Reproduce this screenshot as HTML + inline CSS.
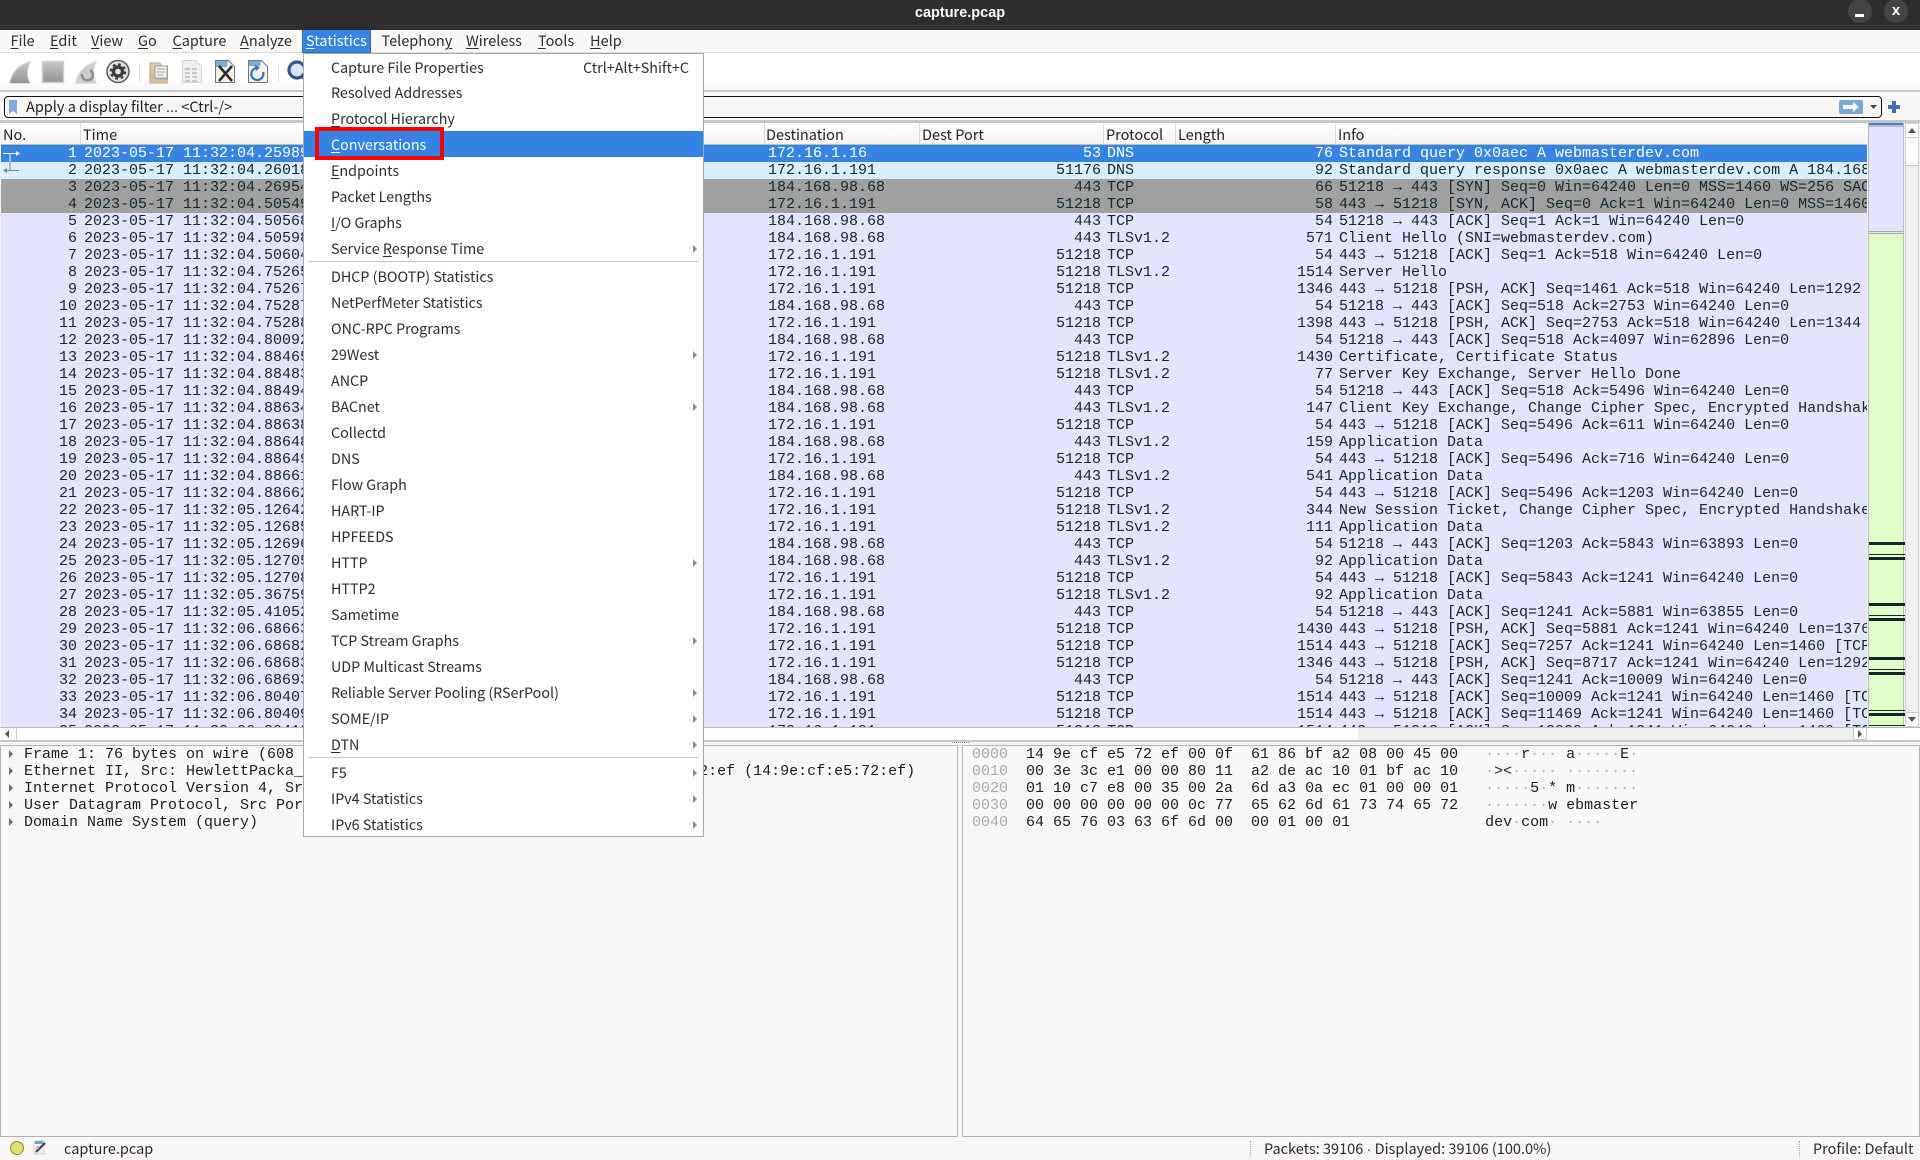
<!DOCTYPE html>
<html lang="en">
<head>
<meta charset="utf-8">
<title>capture.pcap</title>
<style>
html,body{margin:0;padding:0;width:1920px;height:1160px;overflow:hidden;background:#f6f5f4;}
*{box-sizing:border-box;}
body{position:relative;font-family:"Noto Sans CJK SC","Liberation Sans",sans-serif;font-size:14.5px;color:#2a2e2f;}
.a{position:absolute;}
u{text-underline-offset:2px;text-decoration-thickness:1px;}
.ls{font-family:"Liberation Sans",sans-serif;}
#title{left:0;top:0;width:1920px;height:30px;background:#2e2e2e;color:#fff;font-family:"Liberation Sans",sans-serif;font-weight:700;font-size:14.5px;line-height:26px;text-align:center;}
.wc{top:-1px;width:24px;height:24px;border-radius:50%;background:#454545;}
#mb{left:0;top:30px;width:1920px;height:23px;background:#f9f8f6;border-bottom:1px solid #dcdcdc;}
.m{top:30px;height:22px;line-height:21px;white-space:nowrap;}
#sthi{left:302px;top:30px;width:69px;height:23px;background:#3584e4;border:1px solid #2a6fc4;border-top:0;}
#tb{left:0;top:53px;width:1920px;height:39px;background:linear-gradient(#fff,#fff 60%,#f8f8f7);border-bottom:2px solid #c4c4c4;}
#fb{left:0;top:92px;width:1920px;height:31px;background:#f9f8f6;}
#fi{left:4px;top:96px;width:1878px;height:22px;background:#f6f5f3;border:1px solid #111;border-radius:4px;}
#ph{left:26px;top:96px;height:22px;line-height:21px;color:#222;white-space:nowrap;}
#frame{left:0;top:120px;width:1920px;height:3px;background:#c6c6c6;}
#hd{left:1px;top:123px;width:1866px;height:22px;background:linear-gradient(#fff,#f4f4f4);border-bottom:1px solid #bdbdbd;}
.h{top:123px;height:21px;line-height:24px;white-space:nowrap;color:#222;}
.hs{top:123px;width:1px;height:21px;background:#d8d8d8;}
#list{left:1px;top:145px;width:1866px;height:582px;overflow:hidden;background:#e4e4ff;font-family:"Liberation Mono",monospace;font-size:15px;color:#12272e;}
.r{position:relative;height:17px;line-height:17px;white-space:pre;background:#e4e4ff;}
.r span{position:absolute;top:0;height:17px;}
.n{left:0;width:76px;text-align:right;}
.t{left:83px;}
.d{left:767px;}
.p{left:900px;width:200px;text-align:right;}
.o{left:1106px;}
.l{left:1233px;width:99px;text-align:right;}
.i{left:1338px;}
.sel{background:#3584e4;color:#fff;}
.rel{background:#daeeff;}
.gr{background:#a0a0a0;}
#mini{left:1868px;top:123px;width:36px;height:604px;background:#e0ffc8;border-left:1px solid #bbb;border-right:1px solid #bbb;}
.mk{position:absolute;left:0;width:36px;background:#12272e;}
#vt{left:1905px;top:123px;width:14px;height:604px;background:#efefef;border:1px solid #cfcfcf;}
#hsb{left:0;top:727px;width:1920px;height:13px;background:#fff;border-top:1px solid #bbb;}
#split{left:0;top:740px;width:1920px;height:5px;background:#f6f5f4;border-top:2px solid #c6c6c6;}
.pane{top:745px;height:392px;background:#f9f8f6;border:1px solid #b4b4b4;border-bottom:1px solid #b0b0b0;}
.tx{font-family:"Liberation Mono",monospace;font-size:15px;line-height:17px;white-space:pre;color:#1d1d1d;}
.of{color:#a9a9a9;}
.nd{color:#b4b4b4;}
.ar{width:0;height:0;border-left:4px solid #6e6e6e;border-top:4px solid transparent;border-bottom:4px solid transparent;}
#st{left:0;top:1137px;width:1920px;height:23px;background:#f9f8f6;}
.stx{top:1137px;line-height:24px;white-space:nowrap;}
.dv{top:1141px;height:16px;width:0;border-left:1px dotted #aaa;}
#menu{left:303px;top:53px;width:401px;height:784px;background:#fff;border:1px solid #a8a8a8;overflow:hidden;color:#2a2e2f;font-size:14.3px;}
.mi{position:absolute;left:0;width:399px;height:26px;line-height:25px;padding-left:27px;white-space:nowrap;}
.mi.hl{background:#3584e4;color:#fff;line-height:27px;}
.sub::after{content:"";position:absolute;right:6px;top:9px;border-left:4px solid #8a8a8a;border-top:4px solid transparent;border-bottom:4px solid transparent;}
.sp{position:absolute;left:5px;width:389px;height:1px;background:#c4c4c4;}
#red{left:315px;top:127px;width:129px;height:33px;border:4px solid #f00;}
svg{position:absolute;overflow:visible;}
</style>
</head>
<body>
<div class="a" id="title">capture.pcap</div>
<div class="a wc" style="left:1848px"></div>
<div class="a wc" style="left:1884px"></div>
<div class="a" style="left:1855px;top:14px;width:9px;height:3px;background:#fff"></div>
<div class="a" style="left:1890px;top:3px;width:12px;height:16px;color:#fff;font:700 15px/16px 'Liberation Sans',sans-serif;text-align:center">x</div>

<div class="a" id="mb"></div>
<div class="a" id="sthi"></div>
<div class="a m" style="left:10.5px"><u>F</u>ile</div>
<div class="a m" style="left:50px"><u>E</u>dit</div>
<div class="a m" style="left:91px"><u>V</u>iew</div>
<div class="a m" style="left:138px"><u>G</u>o</div>
<div class="a m" style="left:172.5px"><u>C</u>apture</div>
<div class="a m" style="left:240px"><u>A</u>nalyze</div>
<div class="a m" style="left:306px;color:#fff"><u>S</u>tatistics</div>
<div class="a m" style="left:381.5px">Telephon<u>y</u></div>
<div class="a m" style="left:466px"><u>W</u>ireless</div>
<div class="a m" style="left:538px"><u>T</u>ools</div>
<div class="a m" style="left:590px"><u>H</u>elp</div>

<div class="a" id="tb"></div>
<svg class="a" style="left:0;top:52px" width="310" height="44" viewBox="0 0 310 44">
  <defs>
    <linearGradient id="g1" x1="0" y1="0" x2="0" y2="1"><stop offset="0" stop-color="#c8c8c8"/><stop offset="1" stop-color="#929292"/></linearGradient>
    <linearGradient id="g2" x1="0" y1="0" x2="0" y2="1"><stop offset="0" stop-color="#e3d3b4"/><stop offset="1" stop-color="#c6ae88"/></linearGradient>
  </defs>
  <path d="M9.500 31.500C11 21 19 12 30.500 9.500C27 17 26.500 25 30.500 31.500Z" fill="url(#g1)" stroke="#dcdcdc"/>
  <rect x="42.500" y="9.500" width="21" height="21" fill="url(#g1)" stroke="#cfcfcf" stroke-width="1.500"/>
  <path d="M75.500 31.500C77 21 85 12 96.500 9.500C93 17 92.500 25 96.500 31.500Z" fill="#cdcdcd" stroke="#e0e0e0"/>
  <path d="M90 18a5.500 5.500 0 1 1-8 4" fill="none" stroke="#8e8e8e" stroke-width="2.500"/>
  <circle cx="118" cy="19.500" r="11" fill="#e4e4e4" stroke="#5a5a5a" stroke-width="1.500"/>
  <circle cx="118" cy="19.500" r="6.200" fill="#3e3e3e"/>
  <circle cx="118" cy="19.500" r="7.200" fill="none" stroke="#3e3e3e" stroke-width="2.200" stroke-dasharray="2.800 2.850"/>
  <circle cx="118" cy="19.500" r="2.800" fill="#e8e8e8"/>
  <rect x="139" y="11" width="1" height="19" fill="#ddd"/>
  <path d="M150 11h10l1.500 3h6v17h-17.500Z" fill="url(#g2)" stroke="#b6a17c"/>
  <rect x="155" y="14" width="12" height="12" fill="#f6f6f6" stroke="#9a9a9a"/>
  <path d="M157 17h8M157 20h8M157 23h6" stroke="#999" fill="none"/>
  <path d="M150 26h5v2h13v3h-18Z" fill="#d5bf9a"/>
  <path d="M182.500 8.500h13l6 6v16h-19Z" fill="#f0f0f0" stroke="#d4d4d4"/>
  <path d="M185 17h5M192 17h5M185 21h5M192 21h5M185 25h5M192 25h5M185 29h5M192 29h5" stroke="#c8c8c8" stroke-width="2" fill="none"/>
  <path d="M215.500 8.500h13l6 6v16h-19Z" fill="#f3f3e7" stroke="#777"/>
  <path d="M216 9h12l-1 6h-11Z" fill="#74b0e2"/>
  <path d="M219 14L232 29M232 14L219 29" stroke="#2a2a2a" stroke-width="2.500" fill="none"/>
  <path d="M248.500 8.500h13l6 6v16h-19Z" fill="#f3f3e7" stroke="#777"/>
  <path d="M249 9h12l-1 5h-11Z" fill="#74b0e2"/>
  <path d="M263 20a6 6 0 1 1-5-4" fill="none" stroke="#3473c0" stroke-width="2.200"/>
  <path d="M254.500 12.500l5.500 3-4 3.500Z" fill="#3473c0"/>
  <rect x="278" y="11" width="1" height="19" fill="#ddd"/>
  <circle cx="297" cy="18" r="8" fill="#dbe6f5" stroke="#34558f" stroke-width="3.200"/>
  <path d="M302 24l6 6" stroke="#444" stroke-width="3.500"/>
</svg>

<div class="a" id="fb"></div>
<div class="a" id="fi"></div>
<svg class="a" style="left:9px;top:100px" width="9" height="15" viewBox="0 0 9 15"><path d="M0 0h8v14l-4-3-4 3Z" fill="#7ea9de"/></svg>
<div class="a" id="ph">Apply a display filter <span class="ls">...</span> &lt;Ctrl-/&gt;</div>
<svg class="a" style="left:1838px;top:99px" width="60" height="16" viewBox="0 0 60 16">
  <rect x="1" y="1" width="24" height="14" rx="2" fill="#7ca7da"/>
  <path d="M5 6h10V3l6 5-6 5v-3H5Z" fill="#fff"/>
  <path d="M32 6h7l-3.500 4Z" fill="#444"/>
  <path d="M54 2h4v4h4v4h-4v4h-4v-4h-4V6h4Z" fill="#3f6fb5"/>
</svg>

<div class="a" id="frame"></div>
<div class="a" id="hd"></div>
<div class="a h" style="left:3px">No.</div>
<div class="a h" style="left:83px">Time</div>
<div class="a h" style="left:766px">Destination</div>
<div class="a h" style="left:922px">Dest Port</div>
<div class="a h" style="left:1106px">Protocol</div>
<div class="a h" style="left:1178px">Length</div>
<div class="a h" style="left:1338px">Info</div>
<div class="a hs" style="left:80px"></div>
<div class="a hs" style="left:764px"></div>
<div class="a hs" style="left:919px"></div>
<div class="a hs" style="left:1103px"></div>
<div class="a hs" style="left:1175px"></div>
<div class="a hs" style="left:1335px"></div>

<div class="a" id="list">
<div class="r sel"><span class="n">1</span><span class="t">2023-05-17 11:32:04.259890</span><span class="d">172.16.1.16</span><span class="p">53</span><span class="o">DNS</span><span class="l">76</span><span class="i">Standard query 0x0aec A webmasterdev.com</span></div>
<div class="r rel"><span class="n">2</span><span class="t">2023-05-17 11:32:04.260180</span><span class="d">172.16.1.191</span><span class="p">51176</span><span class="o">DNS</span><span class="l">92</span><span class="i">Standard query response 0x0aec A webmasterdev.com A 184.168.98.68</span></div>
<div class="r gr"><span class="n">3</span><span class="t">2023-05-17 11:32:04.269540</span><span class="d">184.168.98.68</span><span class="p">443</span><span class="o">TCP</span><span class="l">66</span><span class="i">51218 → 443 [SYN] Seq=0 Win=64240 Len=0 MSS=1460 WS=256 SACK_PERM</span></div>
<div class="r gr"><span class="n">4</span><span class="t">2023-05-17 11:32:04.505490</span><span class="d">172.16.1.191</span><span class="p">51218</span><span class="o">TCP</span><span class="l">58</span><span class="i">443 → 51218 [SYN, ACK] Seq=0 Ack=1 Win=64240 Len=0 MSS=1460</span></div>
<div class="r"><span class="n">5</span><span class="t">2023-05-17 11:32:04.505680</span><span class="d">184.168.98.68</span><span class="p">443</span><span class="o">TCP</span><span class="l">54</span><span class="i">51218 → 443 [ACK] Seq=1 Ack=1 Win=64240 Len=0</span></div>
<div class="r"><span class="n">6</span><span class="t">2023-05-17 11:32:04.505980</span><span class="d">184.168.98.68</span><span class="p">443</span><span class="o">TLSv1.2</span><span class="l">571</span><span class="i">Client Hello (SNI=webmasterdev.com)</span></div>
<div class="r"><span class="n">7</span><span class="t">2023-05-17 11:32:04.506040</span><span class="d">172.16.1.191</span><span class="p">51218</span><span class="o">TCP</span><span class="l">54</span><span class="i">443 → 51218 [ACK] Seq=1 Ack=518 Win=64240 Len=0</span></div>
<div class="r"><span class="n">8</span><span class="t">2023-05-17 11:32:04.752650</span><span class="d">172.16.1.191</span><span class="p">51218</span><span class="o">TLSv1.2</span><span class="l">1514</span><span class="i">Server Hello</span></div>
<div class="r"><span class="n">9</span><span class="t">2023-05-17 11:32:04.752670</span><span class="d">172.16.1.191</span><span class="p">51218</span><span class="o">TCP</span><span class="l">1346</span><span class="i">443 → 51218 [PSH, ACK] Seq=1461 Ack=518 Win=64240 Len=1292</span></div>
<div class="r"><span class="n">10</span><span class="t">2023-05-17 11:32:04.752870</span><span class="d">184.168.98.68</span><span class="p">443</span><span class="o">TCP</span><span class="l">54</span><span class="i">51218 → 443 [ACK] Seq=518 Ack=2753 Win=64240 Len=0</span></div>
<div class="r"><span class="n">11</span><span class="t">2023-05-17 11:32:04.752880</span><span class="d">172.16.1.191</span><span class="p">51218</span><span class="o">TCP</span><span class="l">1398</span><span class="i">443 → 51218 [PSH, ACK] Seq=2753 Ack=518 Win=64240 Len=1344</span></div>
<div class="r"><span class="n">12</span><span class="t">2023-05-17 11:32:04.800920</span><span class="d">184.168.98.68</span><span class="p">443</span><span class="o">TCP</span><span class="l">54</span><span class="i">51218 → 443 [ACK] Seq=518 Ack=4097 Win=62896 Len=0</span></div>
<div class="r"><span class="n">13</span><span class="t">2023-05-17 11:32:04.884650</span><span class="d">172.16.1.191</span><span class="p">51218</span><span class="o">TLSv1.2</span><span class="l">1430</span><span class="i">Certificate, Certificate Status</span></div>
<div class="r"><span class="n">14</span><span class="t">2023-05-17 11:32:04.884830</span><span class="d">172.16.1.191</span><span class="p">51218</span><span class="o">TLSv1.2</span><span class="l">77</span><span class="i">Server Key Exchange, Server Hello Done</span></div>
<div class="r"><span class="n">15</span><span class="t">2023-05-17 11:32:04.884940</span><span class="d">184.168.98.68</span><span class="p">443</span><span class="o">TCP</span><span class="l">54</span><span class="i">51218 → 443 [ACK] Seq=518 Ack=5496 Win=64240 Len=0</span></div>
<div class="r"><span class="n">16</span><span class="t">2023-05-17 11:32:04.886340</span><span class="d">184.168.98.68</span><span class="p">443</span><span class="o">TLSv1.2</span><span class="l">147</span><span class="i">Client Key Exchange, Change Cipher Spec, Encrypted Handshake Message</span></div>
<div class="r"><span class="n">17</span><span class="t">2023-05-17 11:32:04.886380</span><span class="d">172.16.1.191</span><span class="p">51218</span><span class="o">TCP</span><span class="l">54</span><span class="i">443 → 51218 [ACK] Seq=5496 Ack=611 Win=64240 Len=0</span></div>
<div class="r"><span class="n">18</span><span class="t">2023-05-17 11:32:04.886480</span><span class="d">184.168.98.68</span><span class="p">443</span><span class="o">TLSv1.2</span><span class="l">159</span><span class="i">Application Data</span></div>
<div class="r"><span class="n">19</span><span class="t">2023-05-17 11:32:04.886490</span><span class="d">172.16.1.191</span><span class="p">51218</span><span class="o">TCP</span><span class="l">54</span><span class="i">443 → 51218 [ACK] Seq=5496 Ack=716 Win=64240 Len=0</span></div>
<div class="r"><span class="n">20</span><span class="t">2023-05-17 11:32:04.886610</span><span class="d">184.168.98.68</span><span class="p">443</span><span class="o">TLSv1.2</span><span class="l">541</span><span class="i">Application Data</span></div>
<div class="r"><span class="n">21</span><span class="t">2023-05-17 11:32:04.886620</span><span class="d">172.16.1.191</span><span class="p">51218</span><span class="o">TCP</span><span class="l">54</span><span class="i">443 → 51218 [ACK] Seq=5496 Ack=1203 Win=64240 Len=0</span></div>
<div class="r"><span class="n">22</span><span class="t">2023-05-17 11:32:05.126420</span><span class="d">172.16.1.191</span><span class="p">51218</span><span class="o">TLSv1.2</span><span class="l">344</span><span class="i">New Session Ticket, Change Cipher Spec, Encrypted Handshake Message</span></div>
<div class="r"><span class="n">23</span><span class="t">2023-05-17 11:32:05.126850</span><span class="d">172.16.1.191</span><span class="p">51218</span><span class="o">TLSv1.2</span><span class="l">111</span><span class="i">Application Data</span></div>
<div class="r"><span class="n">24</span><span class="t">2023-05-17 11:32:05.126960</span><span class="d">184.168.98.68</span><span class="p">443</span><span class="o">TCP</span><span class="l">54</span><span class="i">51218 → 443 [ACK] Seq=1203 Ack=5843 Win=63893 Len=0</span></div>
<div class="r"><span class="n">25</span><span class="t">2023-05-17 11:32:05.127050</span><span class="d">184.168.98.68</span><span class="p">443</span><span class="o">TLSv1.2</span><span class="l">92</span><span class="i">Application Data</span></div>
<div class="r"><span class="n">26</span><span class="t">2023-05-17 11:32:05.127080</span><span class="d">172.16.1.191</span><span class="p">51218</span><span class="o">TCP</span><span class="l">54</span><span class="i">443 → 51218 [ACK] Seq=5843 Ack=1241 Win=64240 Len=0</span></div>
<div class="r"><span class="n">27</span><span class="t">2023-05-17 11:32:05.367590</span><span class="d">172.16.1.191</span><span class="p">51218</span><span class="o">TLSv1.2</span><span class="l">92</span><span class="i">Application Data</span></div>
<div class="r"><span class="n">28</span><span class="t">2023-05-17 11:32:05.410520</span><span class="d">184.168.98.68</span><span class="p">443</span><span class="o">TCP</span><span class="l">54</span><span class="i">51218 → 443 [ACK] Seq=1241 Ack=5881 Win=63855 Len=0</span></div>
<div class="r"><span class="n">29</span><span class="t">2023-05-17 11:32:06.686630</span><span class="d">172.16.1.191</span><span class="p">51218</span><span class="o">TCP</span><span class="l">1430</span><span class="i">443 → 51218 [PSH, ACK] Seq=5881 Ack=1241 Win=64240 Len=1376</span></div>
<div class="r"><span class="n">30</span><span class="t">2023-05-17 11:32:06.686820</span><span class="d">172.16.1.191</span><span class="p">51218</span><span class="o">TCP</span><span class="l">1514</span><span class="i">443 → 51218 [ACK] Seq=7257 Ack=1241 Win=64240 Len=1460 [TCP segment</span></div>
<div class="r"><span class="n">31</span><span class="t">2023-05-17 11:32:06.686830</span><span class="d">172.16.1.191</span><span class="p">51218</span><span class="o">TCP</span><span class="l">1346</span><span class="i">443 → 51218 [PSH, ACK] Seq=8717 Ack=1241 Win=64240 Len=1292</span></div>
<div class="r"><span class="n">32</span><span class="t">2023-05-17 11:32:06.686930</span><span class="d">184.168.98.68</span><span class="p">443</span><span class="o">TCP</span><span class="l">54</span><span class="i">51218 → 443 [ACK] Seq=1241 Ack=10009 Win=64240 Len=0</span></div>
<div class="r"><span class="n">33</span><span class="t">2023-05-17 11:32:06.804070</span><span class="d">172.16.1.191</span><span class="p">51218</span><span class="o">TCP</span><span class="l">1514</span><span class="i">443 → 51218 [ACK] Seq=10009 Ack=1241 Win=64240 Len=1460 [TCP segment</span></div>
<div class="r"><span class="n">34</span><span class="t">2023-05-17 11:32:06.804090</span><span class="d">172.16.1.191</span><span class="p">51218</span><span class="o">TCP</span><span class="l">1514</span><span class="i">443 → 51218 [ACK] Seq=11469 Ack=1241 Win=64240 Len=1460 [TCP segment</span></div>
<div class="r"><span class="n">35</span><span class="t">2023-05-17 11:32:06.804100</span><span class="d">172.16.1.191</span><span class="p">51218</span><span class="o">TCP</span><span class="l">1514</span><span class="i">443 → 51218 [ACK] Seq=12929 Ack=1241 Win=64240 Len=1460 [TCP segment</span></div>
</div>
<svg class="a" style="left:0;top:145px" width="24" height="34" viewBox="0 0 24 34">
  <path d="M3 8.500H17M10 8.500V17" stroke="#fff" fill="none"/>
  <path d="M16 6l4 2.500-4 2.500Z" fill="#fff"/>
  <path d="M10 17V25.500M5 25.500H19" stroke="#7c8388" fill="none"/>
  <path d="M7 23l-4 2.500 4 2.500Z" fill="#7c8388"/>
</svg>

<div class="a" id="mini">
  <div class="a" style="left:0;top:0;width:34px;height:2px;background:#3584e4"></div>
  <div class="a" style="left:0;top:2px;width:34px;height:2px;background:#bbb"></div>
  <div class="a" style="left:0;top:4px;width:34px;height:104px;background:#e4e4ff"></div>
  <div class="a" style="left:0;top:108px;width:34px;height:1px;background:#aaa"></div>
  <div class="a" style="left:0;top:110px;width:34px;height:1px;background:#aaa"></div>
  <div class="a" style="left:0;top:109px;width:34px;height:1px;background:#e4e4ff"></div>
  <div class="mk" style="top:418.500px;height:3.500px"></div>
  <div class="mk" style="top:431px;height:1px"></div>
  <div class="mk" style="top:433.500px;height:3px"></div>
  <div class="mk" style="top:479.500px;height:3.500px"></div>
  <div class="mk" style="top:492px;height:1px"></div>
  <div class="mk" style="top:495px;height:3px"></div>
  <div class="mk" style="top:533.500px;height:3.500px"></div>
  <div class="mk" style="top:546px;height:1px"></div>
  <div class="mk" style="top:549px;height:3px"></div>
  <div class="mk" style="top:587px;height:1px"></div>
  <div class="mk" style="top:590px;height:3px"></div>
  <div class="mk" style="top:601.500px;height:1.500px"></div>
</div>

<div class="a" id="vt">
  <div class="a" style="left:0;top:0;width:12px;height:14px;background:#fff;border-bottom:1px solid #ccc"></div>
  <div class="a" style="left:2px;top:4px;width:0;height:0;border-left:4px solid transparent;border-right:4px solid transparent;border-bottom:5px solid #555"></div>
  <div class="a" style="left:0;top:14px;width:12px;height:28px;background:#fff;border-bottom:1px solid #ccc"></div>
  <div class="a" style="left:0;top:588px;width:12px;height:14px;background:#fff;border-top:1px solid #ccc"></div>
  <div class="a" style="left:2px;top:593px;width:0;height:0;border-left:4px solid transparent;border-right:4px solid transparent;border-top:5px solid #555"></div>
</div>

<div class="a" id="hsb">
  <div class="a" style="left:1358px;top:0;width:495px;height:12px;background:#eee"></div>
  <div class="a" style="left:16px;top:0;width:1px;height:12px;background:#ccc"></div>
  <div class="a" style="left:5px;top:2px;width:0;height:0;border-right:4px solid #555;border-top:4px solid transparent;border-bottom:4px solid transparent"></div>
  <div class="a" style="left:1853px;top:0;width:14px;height:12px;background:#fff;border:1px solid #ccc;border-top:0"></div>
  <div class="a" style="left:1858px;top:2px;width:0;height:0;border-left:4px solid #555;border-top:4px solid transparent;border-bottom:4px solid transparent"></div>
</div>
<div class="a" id="split">
  <div class="a" style="left:952px;top:0;width:17px;height:1px;border-top:1px dotted #999"></div>
</div>

<div class="a pane" style="left:0;width:958px"></div>
<div class="a pane" style="left:962px;width:958px"></div>

<div class="a ar" style="left:9px;top:750px"></div>
<div class="a ar" style="left:9px;top:767px"></div>
<div class="a ar" style="left:9px;top:784px"></div>
<div class="a ar" style="left:9px;top:801px"></div>
<div class="a ar" style="left:9px;top:818px"></div>
<div class="a tx" style="left:24px;top:746px">Frame 1: 76 bytes on wire (608 bits), 76 bytes captured (608 bits)
Ethernet II, Src: HewlettPacka_86:bf:a2 (00:0f:61:86:bf:a2), Dst: Dell_e5:72:ef (14:9e:cf:e5:72:ef)
Internet Protocol Version 4, Src: 172.16.1.191, Dst: 172.16.1.16
User Datagram Protocol, Src Port: 51176, Dst Port: 53
Domain Name System (query)</div>
<div class="a tx" style="left:972px;top:746px"><span class="of">0000</span>  14 9e cf e5 72 ef 00 0f  61 86 bf a2 08 00 45 00   <span class="nd">····</span>r<span class="nd">···</span> a<span class="nd">·····</span>E<span class="nd">·</span>
<span class="of">0010</span>  00 3e 3c e1 00 00 80 11  a2 de ac 10 01 bf ac 10   <span class="nd">·</span>&gt;&lt;<span class="nd">·····</span> <span class="nd">········</span>
<span class="of">0020</span>  01 10 c7 e8 00 35 00 2a  6d a3 0a ec 01 00 00 01   <span class="nd">·····</span>5<span class="nd">·</span>* m<span class="nd">·······</span>
<span class="of">0030</span>  00 00 00 00 00 00 0c 77  65 62 6d 61 73 74 65 72   <span class="nd">·······</span>w ebmaster
<span class="of">0040</span>  64 65 76 03 63 6f 6d 00  00 01 00 01               dev<span class="nd">·</span>com<span class="nd">·</span> <span class="nd">····</span></div>

<div class="a" id="st"></div>
<div class="a" style="left:10px;top:1141px;width:14px;height:14px;border-radius:50%;background:#e0e070;border:1px solid #8a8a4a"></div>
<svg class="a" style="left:33px;top:1140px" width="15" height="15" viewBox="0 0 15 15">
  <path d="M1 1h10v13H1Z" fill="#f2f2f2" stroke="#cfcfcf"/>
  <path d="M2 1h8v3H2Z" fill="#62a7e0"/>
  <path d="M3 12L12 3" stroke="#444" stroke-width="2.200"/>
  <path d="M3 7h4M3 9h3" stroke="#999"/>
</svg>
<div class="a stx" style="left:64px">capture.pcap</div>
<div class="a dv" style="left:1250px"></div>
<div class="a stx" style="left:1264px">Packets: 39106 <span class="ls">·</span> Displayed: 39106 (100.0%)</div>
<div class="a dv" style="left:1799px"></div>
<div class="a stx" style="left:1813px">Profile: Default</div>

<div class="a" id="menu">
  <div class="mi" style="top:0.500px">Capture File Properties<span style="position:absolute;right:14px;top:0">Ctrl+Alt+Shift+C</span></div>
  <div class="mi" style="top:26px">Resolved Addresses</div>
  <div class="mi" style="top:52px"><u>P</u>rotocol Hierarchy</div>
  <div class="mi hl" style="top:77px"><u>C</u>onversations</div>
  <div class="mi" style="top:104px"><u>E</u>ndpoints</div>
  <div class="mi" style="top:130px">Packet Lengths</div>
  <div class="mi" style="top:156px"><u>I</u>/O Graphs</div>
  <div class="mi sub" style="top:182px">Service <u>R</u>esponse Time</div>
  <div class="sp" style="top:207px"></div>
  <div class="mi" style="top:210px">DHCP (BOOTP) Statistics</div>
  <div class="mi" style="top:236px">NetPerfMeter Statistics</div>
  <div class="mi" style="top:262px">ONC-RPC Programs</div>
  <div class="mi sub" style="top:288px">29West</div>
  <div class="mi" style="top:314px">ANCP</div>
  <div class="mi sub" style="top:340px">BACnet</div>
  <div class="mi" style="top:366px">Collectd</div>
  <div class="mi" style="top:392px">DNS</div>
  <div class="mi" style="top:418px">Flow Graph</div>
  <div class="mi" style="top:444px">HART-IP</div>
  <div class="mi" style="top:470px">HPFEEDS</div>
  <div class="mi sub" style="top:496px">HTTP</div>
  <div class="mi" style="top:522px">HTTP2</div>
  <div class="mi" style="top:548px">Sametime</div>
  <div class="mi sub" style="top:574px">TCP Stream Graphs</div>
  <div class="mi" style="top:600px">UDP Multicast Streams</div>
  <div class="mi sub" style="top:626px">Reliable Server Pooling (RSerPool)</div>
  <div class="mi sub" style="top:652px">SOME/IP</div>
  <div class="mi sub" style="top:678px"><u>D</u>TN</div>
  <div class="sp" style="top:703px"></div>
  <div class="mi sub" style="top:706px">F5</div>
  <div class="mi sub" style="top:732px">IPv4 Statistics</div>
  <div class="mi sub" style="top:758px">IPv6 Statistics</div>
</div>
<div class="a" id="red"></div>
</body>
</html>
